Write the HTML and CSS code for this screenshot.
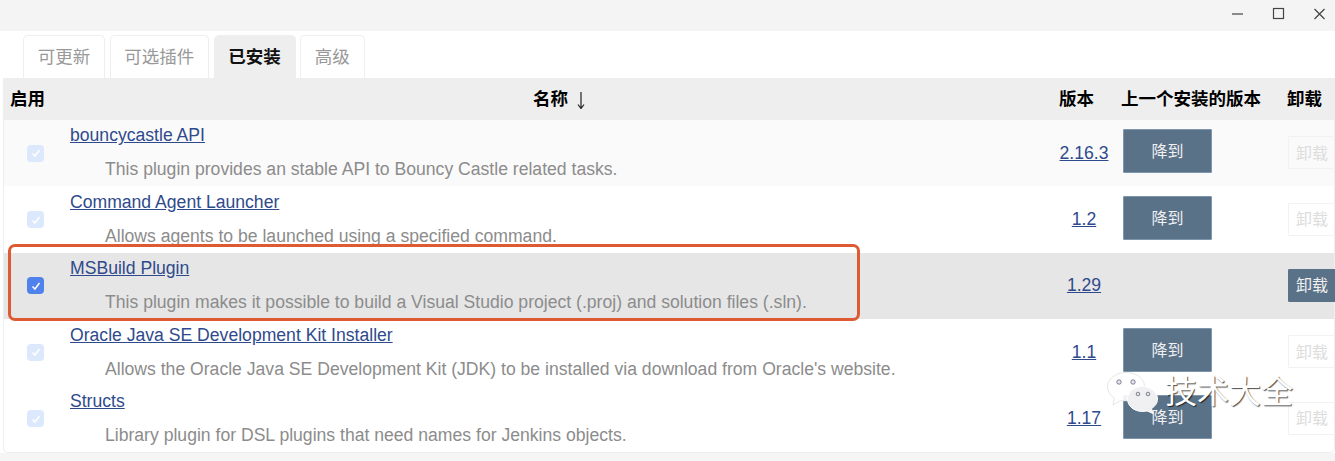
FILE: index.html
```html
<!DOCTYPE html>
<html>
<head>
  <title>Plugin Manager</title>
  <link rel="stylesheet" href="styles.css">
</head>
<body>
  <div class="titlebar">
    <svg class="win-icon" width="16" height="16" viewBox="0 0 16 16"><path d="M2 8h11" /></svg>
    <svg class="win-icon" width="16" height="16" viewBox="0 0 16 16"><rect x="2.500" y="2.500" width="10" height="10" /></svg>
    <svg class="win-icon" width="16" height="16" viewBox="0 0 16 16"><path d="M2.500 3l10 10M12.500 3l-10 10" /></svg>
  </div>

  <div class="tabs">
    <a class="tab">可更新</a>
    <a class="tab">可选插件</a>
    <a class="tab active">已安装</a>
    <a class="tab">高级</a>
  </div>

  <div class="plugins">
    <div class="row head">
      <div class="col-enable">启用</div>
      <div class="col-name">名称
        <svg class="arrow" width="8" height="17" viewBox="0 0 8 17"><path d="M4 0v16M1 12.500L4 16.500l3-4" /></svg>
      </div>
      <div class="col-version">版本</div>
      <div class="col-prev">上一个安装的版本</div>
      <div class="col-remove">卸载</div>
    </div>

    <div class="row tint">
      <div class="col-enable"><span class="check"><svg width="12" height="12" viewBox="0 0 12 12"><path d="M2.500 6.500l2.400 2.500 4.600-6" /></svg></span></div>
      <div class="col-name">
        <a class="link plugin-name">bouncycastle API</a>
        <div class="desc">This plugin provides an stable API to Bouncy Castle related tasks.</div>
      </div>
      <div class="col-version"><a class="link">2.16.3</a></div>
      <div class="col-prev"><button class="downgrade">降到</button></div>
      <div class="col-remove"><button class="remove">卸载</button></div>
    </div>

    <div class="row">
      <div class="col-enable"><span class="check"><svg width="12" height="12" viewBox="0 0 12 12"><path d="M2.500 6.500l2.400 2.500 4.600-6" /></svg></span></div>
      <div class="col-name">
        <a class="link plugin-name">Command Agent Launcher</a>
        <div class="desc">Allows agents to be launched using a specified command.</div>
      </div>
      <div class="col-version"><a class="link">1.2</a></div>
      <div class="col-prev"><button class="downgrade">降到</button></div>
      <div class="col-remove"><button class="remove">卸载</button></div>
    </div>

    <div class="row selected">
      <div class="col-enable"><span class="check on"><svg width="12" height="12" viewBox="0 0 12 12"><path d="M2.500 6.500l2.400 2.500 4.600-6" /></svg></span></div>
      <div class="col-name">
        <a class="link plugin-name">MSBuild Plugin</a>
        <div class="desc">This plugin makes it possible to build a Visual Studio project (.proj) and solution files (.sln).</div>
      </div>
      <div class="col-version"><a class="link">1.29</a></div>
      <div class="col-prev"></div>
      <div class="col-remove"><button class="remove on">卸载</button></div>
    </div>

    <div class="row">
      <div class="col-enable"><span class="check"><svg width="12" height="12" viewBox="0 0 12 12"><path d="M2.500 6.500l2.400 2.500 4.600-6" /></svg></span></div>
      <div class="col-name">
        <a class="link plugin-name">Oracle Java SE Development Kit Installer</a>
        <div class="desc">Allows the Oracle Java SE Development Kit (JDK) to be installed via download from Oracle's website.</div>
      </div>
      <div class="col-version"><a class="link">1.1</a></div>
      <div class="col-prev"><button class="downgrade">降到</button></div>
      <div class="col-remove"><button class="remove">卸载</button></div>
    </div>

    <div class="row">
      <div class="col-enable"><span class="check"><svg width="12" height="12" viewBox="0 0 12 12"><path d="M2.500 6.500l2.400 2.500 4.600-6" /></svg></span></div>
      <div class="col-name">
        <a class="link plugin-name">Structs</a>
        <div class="desc">Library plugin for DSL plugins that need names for Jenkins objects.</div>
      </div>
      <div class="col-version"><a class="link">1.17</a></div>
      <div class="col-prev"><button class="downgrade">降到</button></div>
      <div class="col-remove"><button class="remove">卸载</button></div>
    </div>
  </div>

  <div class="statusbar"></div>

  <div class="highlight"></div>

  <div class="watermark">
    <svg class="wechat" width="52" height="42" viewBox="0 0 52 42">
      <path class="bubble back" d="M19 .5C8.800.5.500 6.800.500 14.500c0 5 3 9 7 11.500L6 33l7.500-4.500c2 .5 3.500.5 5.500.5 10.200 0 18.500-6.500 18.500-14.500S29.200.5 19 .5z" />
      <path class="bubble" d="M35.500 14.500c-8.300 0-15 5.500-15 12.500s6.700 12.500 15 12.500c1.500 0 3-.2 4.500-.6l6 2.600-1.500-5c3.800-2.300 6-5.700 6-9.500 0-7-6.700-12.500-15-12.500z" />
      <circle class="eye" cx="12" cy="10" r="2.200" />
      <circle class="eye" cx="26" cy="10" r="2.200" />
      <circle class="eye" cx="31" cy="22" r="1.800" />
      <circle class="eye" cx="41" cy="22" r="1.800" />
    </svg>
    <span class="mark-text">技术大全</span>
  </div>
</body>
</html>
```

FILE: styles.css
```css
body {
  margin: 0;
  height: 461px;
  overflow: hidden;
  position: relative;
  background-color: #fff;
  font-family: "Liberation Sans", "Noto Sans CJK SC", sans-serif;
  font-size: 17.600px;
  color: #000;
}

.titlebar {
  height: 31px;
  background-color: #f4f4f4;
  display: flex;
  justify-content: flex-end;
  align-items: center;
  gap: 25px;
  padding: 0 7px 3px 0;
  box-sizing: border-box;
}

.win-icon {
  fill: none;
  stroke: #444;
  stroke-width: 1.200;
}

.tabs {
  display: flex;
  gap: 4.500px;
  height: 47px;
  padding: 4px 0 0 23px;
  box-sizing: border-box;
}

.tab {
  display: flex;
  align-items: center;
  padding: 0 13.750px 4px;
  font-size: 17.500px;
  color: #999;
  border: 1px solid #eee;
  border-bottom: none;
  border-radius: 5px 5px 0 0;
}

.tab.active {
  background-color: #eee;
  color: #111;
  font-weight: bold;
}

.plugins {
  margin-left: 3px;
  height: 375px;
  border: 1px solid #eee;
  border-top: none;
  border-radius: 0 0 5px 5px;
  box-sizing: border-box;
}

.statusbar {
  height: 8px;
  background-color: #f5f5f5;
}

.row {
  display: flex;
  height: 66.400px;
}

.row.head {
  height: 42px;
  background-color: #eee;
  align-items: center;
  font-size: 17.500px;
  font-weight: bold;
  padding-bottom: 3px;
  box-sizing: border-box;
}

.row.tint {
  background-color: #fafafa;
}

.row.selected {
  background-color: #e6e6e6;
}

.col-enable {
  width: 66px;
  flex: none;
  display: flex;
  align-items: center;
  padding-left: 6px;
  box-sizing: border-box;
}

.col-name {
  flex: 1;
  min-width: 0;
}

.head .col-name {
  display: flex;
  justify-content: center;
  align-items: center;
  gap: 9px;
  padding-right: 4px;
}

.arrow {
  fill: none;
  stroke: #222;
  stroke-width: 1.200;
  margin-top: 5px;
}

.col-version {
  width: 64px;
  flex: none;
  display: flex;
  align-items: center;
  justify-content: center;
}

.head .col-version {
  justify-content: flex-start;
  padding-left: 7px;
  box-sizing: border-box;
}

.col-prev {
  width: 165px;
  flex: none;
  display: flex;
  align-items: center;
  padding-left: 5px;
  box-sizing: border-box;
}

.col-remove {
  width: 53px;
  flex: none;
  display: flex;
  align-items: center;
  padding-left: 6px;
  box-sizing: border-box;
  white-space: nowrap;
}

.row:not(.head) .col-prev {
  padding-left: 7px;
}

.row:not(.head) .col-remove {
  padding-left: 7px;
}

.link {
  color: #2f4a8c;
  text-decoration: underline;
}

.plugin-name {
  display: block;
  margin-top: 4.400px;
  line-height: 22px;
}

.desc {
  margin: 12px 0 0 35px;
  color: #8c8c8c;
  line-height: 22px;
  white-space: nowrap;
}

.check {
  width: 17px;
  height: 17px;
  margin-left: 17px;
  border-radius: 4px;
  background-color: #dce8fb;
  display: flex;
  align-items: center;
  justify-content: center;
}

.check path {
  fill: none;
  stroke: #fff;
  stroke-width: 1.500;
}

.check.on {
  background-color: #4f82ea;
}

.downgrade {
  width: 89px;
  height: 44px;
  margin-bottom: 4px;
  border: 1px solid #7d96ad;
  border-radius: 1px;
  background-color: #5a7288;
  color: #f0f0f0;
  font: inherit;
  font-size: 16px;
  padding: 0 0 2px;
}

.remove {
  width: 48px;
  height: 33px;
  margin-bottom: 1px;
  flex: none;
  border: 1px solid #f2f2f2;
  border-radius: 1px;
  background-color: transparent;
  color: #ddd;
  font: inherit;
  font-size: 16px;
  padding: 0 0 2px;
}

.remove.on {
  background-color: #5a7288;
  border-color: #5a7288;
  color: #f0f0f0;
}

.highlight {
  position: absolute;
  left: 8px;
  top: 244px;
  width: 852px;
  height: 77px;
  border: 3.500px solid #dd5a33;
  border-radius: 7px;
  box-sizing: border-box;
}

.watermark {
  position: absolute;
  left: 1107px;
  top: 372px;
  display: flex;
  align-items: flex-start;
  gap: 6px;
}

.mark-text {
  font-size: 32px;
  line-height: 40px;
  color: #fff;
  text-shadow: 1px 1px 1px rgba(0, 0, 0, 0.7);
}

.bubble {
  fill: #f0f0f3;
  stroke: #fff;
  stroke-width: 1;
}

.bubble.back {
  fill: rgba(255, 255, 255, 0.9);
  stroke: #ccc;
  stroke-width: .5;
}

.eye {
  fill: #e4e8ee;
  stroke: #667;
  stroke-width: .8;
}
```
